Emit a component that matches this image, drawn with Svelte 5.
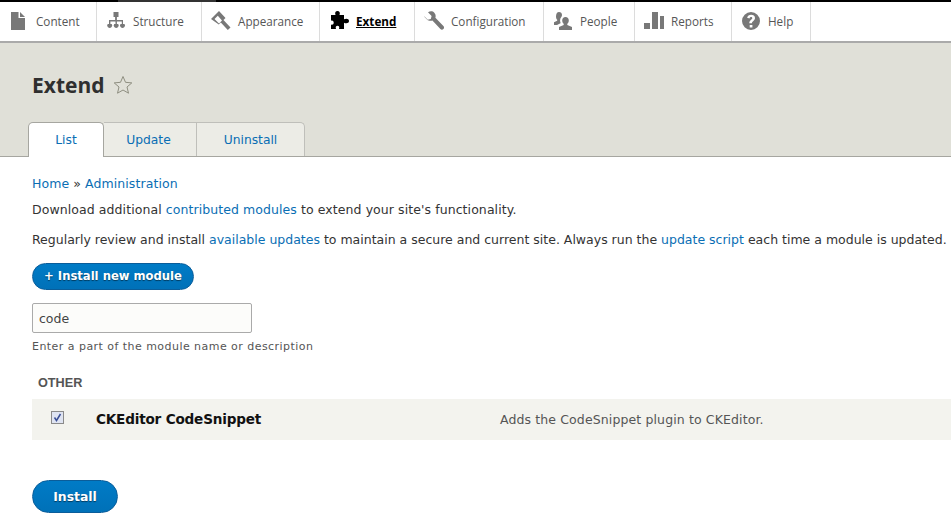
<script lang="ts">
  const menu = [
    { label: "Content", width: 97, icon: "content" },
    { label: "Structure", width: 105, icon: "structure" },
    { label: "Appearance", width: 118, icon: "appearance" },
    { label: "Extend", width: 95, icon: "extend", active: true },
    { label: "Configuration", width: 129, icon: "configuration" },
    { label: "People", width: 91, icon: "people" },
    { label: "Reports", width: 97, icon: "reports" },
    { label: "Help", width: 79, icon: "help" },
  ];
</script>

{#snippet icon(name: string)}
  <svg class="icon" viewBox="0 0 20 20" fill={name === "extend" ? "#000" : "#787878"}>
    {#if name === "content"}
      <path d="M2 1h7.500v6H16v12H2z" /><path d="M11 1l5 5h-5z" />
    {:else if name === "structure"}
      <path d="M7.500 1h5v5h-1.600v3h6.100v4h1.500a2.500 2.500 0 1 1-4 0h1.300v-2.600h-4.900V13h1.300a2.500 2.500 0 1 1-4 0h1.300v-2.600H4.400V13h1.300a2.500 2.500 0 1 1-4 0H3V9h6.100V6H7.500z" />
    {:else if name === "appearance"}
      <path fill-rule="evenodd" d="M0 8L8 0l6.500 7-2 2 7 7.500-2.700 2.500-7-7.500-2 2zM3.500 8l4.500 4.500 3-3L6.800 4.800z" />
    {:else if name === "extend"}
      <path d="M2 4h4.500C5.500 1.500 6.700 0 8.500 0s3 1.500 2 4H15v4.300c2.200-1 5-.6 5 1.700s-2.800 2.700-5 1.700V18h-5c.8-2.200-.2-3.200-1.500-3.200S6.200 15.800 7 18H2v-4.500c1.700.6 2.700-.4 2.700-1.800S3.700 9 2 9.700z" />
    {:else if name === "configuration"}
      <path d="M0 5l3.800 3.700 3-.7.800-3-3.600-3.800C6.500-.2 8.800.2 10.300 1.700c1.300 1.400 1.700 3.200 1.100 5l8 8.300c.9 1 .8 2.200 0 3-.9.900-2.100.9-3 0l-8-8.500c-1.800.7-3.800.3-5.400-1.100C1.600 7.300.8 6.500 0 5z" />
    {:else if name === "people"}
      <path d="M12.500 6c2 0 3.300 1.500 3.300 3.500 0 1.500-.7 2.700-1.500 3.300v1.200l4.700 2V19H6v-3l4.700-2v-1.200C9.900 12.200 9.200 11 9.200 9.500 9.200 7.500 10.500 6 12.500 6z" /><path d="M6 1c1.800 0 3 1.300 3 3 0 1-.3 1.800-1 2.500-1 1.200-1.200 3.500-.5 5v.8L4 14H1v-2.700l3.200-1.500v-1C3.500 8.200 3 7 3 5.500 3 3 4 1 6 1z" />
    {:else if name === "reports"}
      <rect x="0" y="12" width="6" height="6" /><rect x="8" y="1" width="6" height="17" /><rect x="16" y="5" width="4" height="13" />
    {:else}
      <path fill-rule="evenodd" d="M10 1a9 9 0 1 1 0 18 9 9 0 0 1 0-18zM8.700 14v2.500h2.700V14zM10.100 3.800c-2 0-3.500.9-4 3l2.400.7c.2-1 .7-1.500 1.500-1.500s1.300.5 1.300 1.100c0 .7-.5 1.100-1.200 1.700-1.100.9-1.800 1.700-1.800 3.500h2.600c0-1 .3-1.400 1.200-2.100 1-.8 1.900-1.700 1.900-3.200 0-2.300-1.800-3.200-3.900-3.200z" />
    {/if}
  </svg>
{/snippet}

<nav class="toolbar">
  {#each menu as item}
    <a href="#top" class="tool" class:active={item.active} style="width: {item.width}px">
      {@render icon(item.icon)}
      <span>{item.label}</span>
    </a>
  {/each}
</nav>

<header class="head">
  <h1>Extend <svg class="star" viewBox="0 0 20 20"><path d="M10 1.500l2.500 5.800 6.300.6-4.800 4.100 1.500 6.200L10 15l-5.500 3.200L6 12 1.200 7.900l6.300-.6z" /></svg></h1>
  <div class="tabs">
    <a href="#top" class="tab current">List</a>
    <a href="#top" class="tab update">Update</a>
    <a href="#top" class="tab uninstall">Uninstall</a>
  </div>
</header>

<main>
  <div class="crumbs"><a href="#top">Home</a> » <a href="#top">Administration</a></div>
  <p class="first">Download additional <a href="#top">contributed modules</a> to extend your site's functionality.</p>
  <p class="second">Regularly review and install <a href="#top">available updates</a> to maintain a secure and current site. Always run the <a href="#top">update script</a> each time a module is updated.</p>
  <a href="#top" class="button add">+ Install new module</a>
  <input class="filter" type="text" value="code" />
  <div class="hint">Enter a part of the module name or description</div>
  <div class="group">OTHER</div>
  <div class="row">
    <span class="check">
      <svg viewBox="0 0 13 13"><rect x=".5" y=".5" width="12" height="12" fill="#dfe4f2" stroke="#8a8a8a" /><path d="M3.500 6.500l2 3 4-6.500" fill="none" stroke="#3a4f96" stroke-width="1.500" /></svg>
    </span>
    <span class="name">CKEditor CodeSnippet</span>
    <span class="desc">Adds the CodeSnippet plugin to CKEditor.</span>
  </div>
  <a href="#top" class="button install">Install</a>
</main>

<style>
  :global(body) {
    margin: 0;
    overflow: hidden;
    background: #fff;
    color: #333;
    font-family: "DejaVu Sans", sans-serif;
  }

  a {
    color: #0a6eb4;
    text-decoration: none;
  }

  .toolbar {
    position: relative;
    display: flex;
    box-sizing: border-box;
    height: 43px;
    border-top: 2px solid #000;
    border-bottom: 2px solid #aaa;
    background: #fff;
  }

  .toolbar::before {
    position: absolute;
    top: -2px;
    left: 118px;
    width: 98px;
    height: 2px;
    background: #333;
    content: "";
  }

  .tool {
    display: flex;
    align-items: center;
    gap: 7px;
    box-sizing: border-box;
    padding: 0 0 2px 9px;
    border-right: 1px solid #dcdcdc;
    color: #565656;
    font-family: "Open Sans", sans-serif;
    font-size: 11.700px;
  }

  .tool.active {
    color: #000;
    font-weight: 700;
  }

  .tool.active span {
    text-decoration: underline;
  }

  .icon {
    flex: none;
    width: 20px;
    height: 20px;
  }

  .head {
    box-sizing: border-box;
    height: 114px;
    padding: 28px 0 0 32px;
    border-bottom: 1px solid #a6a6a0;
    background: #e0e0d8;
  }

  h1 {
    display: flex;
    align-items: center;
    gap: 8px;
    margin: 0;
    height: 28px;
    color: #2f2f2f;
    font-family: "Open Sans", sans-serif;
    font-size: 21px;
    font-weight: 700;
  }

  .star {
    width: 20px;
    height: 20px;
    fill: none;
    stroke: #8e8e80;
  }

  .tabs {
    display: flex;
    height: 35px;
    margin: 23px 0 0 -4px;
  }

  .tab {
    display: flex;
    align-items: center;
    justify-content: center;
    box-sizing: border-box;
    height: 34px;
    border: 1px solid #bfbfba;
    border-bottom: 0;
    background: #ecece6;
    font-size: 12.300px;
  }

  .current {
    width: 76px;
    height: 35px;
    border-color: #a6a6a0;
    border-radius: 5px 5px 0 0;
    background: #fff;
  }

  .update {
    width: 92px;
    padding-right: 3px;
    border-left: 0;
    border-right: 0;
  }

  .uninstall {
    width: 109px;
    border-radius: 0 5px 0 0;
  }

  main {
    padding: 19px 0 0 32px;
    font-size: 12.500px;
    line-height: 15px;
    letter-spacing: 0.080px;
  }

  .crumbs {
    height: 15px;
  }

  p {
    margin: 0;
    white-space: nowrap;
  }

  .first {
    margin-top: 11px;
  }

  .second {
    margin-top: 15px;
    letter-spacing: 0;
  }

  .button {
    display: inline-flex;
    align-items: center;
    justify-content: center;
    box-sizing: border-box;
    border: 1px solid #0a5d9a;
    border-radius: 20px;
    background: linear-gradient(#007bc6, #0071b8);
    color: #fff;
    font-weight: 700;
    letter-spacing: 0;
    text-shadow: 0 1px 1px rgba(0, 0, 0, 0.5);
  }

  .add {
    display: flex;
    width: 162px;
    height: 27px;
    margin-top: 16px;
    font-size: 11.600px;
  }

  .filter {
    display: block;
    box-sizing: border-box;
    width: 220px;
    height: 30px;
    margin-top: 13px;
    padding: 0 6px;
    border: 1px solid #aaa;
    border-radius: 2px;
    background: #fcfcfa;
    color: #444;
    font: 12.500px "DejaVu Sans", sans-serif;
  }

  .hint {
    margin-top: 6px;
    color: #555;
    font-size: 11px;
    letter-spacing: 0.460px;
  }

  .group {
    margin: 22px 0 0 6px;
    color: #555;
    font-family: "Liberation Sans", sans-serif;
    font-size: 12.700px;
    font-weight: 700;
    letter-spacing: 0;
  }

  .row {
    display: flex;
    align-items: center;
    height: 41px;
    margin-top: 8px;
    background: #f3f3ee;
  }

  .check {
    box-sizing: border-box;
    width: 64px;
    height: 13px;
    margin-top: -4px;
    padding-left: 19px;
  }

  .check svg {
    display: block;
    width: 13px;
    height: 13px;
  }

  .name {
    width: 404px;
    color: #111;
    font-size: 13.600px;
    font-weight: 700;
    letter-spacing: -0.200px;
  }

  .desc {
    color: #555;
    letter-spacing: 0.120px;
  }

  .install {
    width: 86px;
    height: 33px;
    margin-top: 40px;
    font-size: 12.400px;
  }
</style>
